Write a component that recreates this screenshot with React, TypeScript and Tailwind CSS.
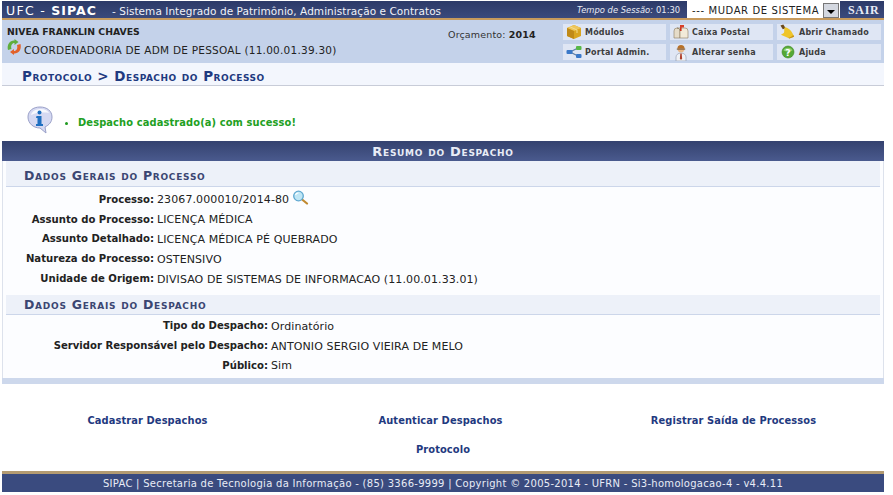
import React from "react";

const font = "font-['DejaVu_Sans','Verdana',sans-serif]";

function Row({ label, labelW, children }: { label: string; labelW: string; children: React.ReactNode }) {
  return (
    <div className="flex h-[19.8px] items-center text-[11px] leading-none text-[#222]">
      <div className={`${labelW} shrink-0 text-right text-[10.1px] font-bold text-[#222]`}>{label}</div>
      <div className="ml-[3px] flex items-center tracking-[0.1px]">{children}</div>
    </div>
  );
}

function SectionTitle({ children, tall }: { children: React.ReactNode; tall?: boolean }) {
  return (
    <div
      className={`${tall ? "h-[26px] pt-[5px]" : "h-[20px] pt-[1px]"} mx-[3px] flex items-center border-b border-[#ccd6ea] bg-[#edf1f9] pl-[18px] text-[12.5px] font-bold leading-none tracking-[0.73px] text-[#3b4672] [font-variant:small-caps]`}
    >
      {children}
    </div>
  );
}

function Btn({ icon, label, w }: { icon: React.ReactNode; label: string; w: string }) {
  return (
    <div className={`${w} flex h-[16px] items-center whitespace-nowrap bg-[#dfe6f4] text-[8px] font-bold leading-none tracking-[0.2px] text-[#3d3d3d]`}>
      <span className="ml-[3px] mr-[3px] flex w-[16px] justify-center">{icon}</span>
      <span className="pt-[2px]">{label}</span>
    </div>
  );
}

const Box = (
  <svg width="16" height="16" viewBox="0 0 16 16">
    <path d="M1 4 8 1l7 3v8l-7 3-7-3z" fill="#d9a520" />
    <path d="M1 4l7 3 7-3-7-3z" fill="#eec65a" />
    <path d="M8 7v8l-7-3V4z" fill="#c08a18" />
    <path d="M4 2.800 11 6v3" stroke="#f3dc8f" strokeWidth="1" fill="none" />
  </svg>
);
const Mail = (
  <svg width="16" height="16" viewBox="0 0 16 16">
    <path d="M1 7a3 3 0 0 1 6 0v7H1z" fill="#e6dcc8" stroke="#8a7a60" strokeWidth=".6" />
    <path d="M4 4h8a3 3 0 0 1 3 3v7H7V7a3 3 0 0 0-3-3z" fill="#f2ead9" stroke="#8a7a60" strokeWidth=".6" />
    <path d="M7 1h1.600v6H7z" fill="#c8321f" />
    <path d="M7 1h4v2.500H7z" fill="#d8402a" />
  </svg>
);
const Bell = (
  <svg width="17" height="16" viewBox="0 0 17 16">
    <path d="M0.500 1 3.500 0 6 4 3 5z" fill="#6b4a1c" />
    <path d="M5 3c3 0 7 3 9 8l1 2-5 2-9-4 3-2c1-1 0-4 1-6z" fill="#efc52a" />
    <path d="M10 15l5-2-1-2c-1 2-3 3-5 3z" fill="#c4911a" />
  </svg>
);
const Share = (
  <svg width="16" height="14" viewBox="0 0 16 14">
    <path d="M4 7 12 3M4 7l8 4" stroke="#5a7aa0" strokeWidth="1.200" />
    <rect x="0.500" y="5" width="6" height="4" rx="1" fill="#3a78c8" />
    <rect x="10" y="1" width="5.500" height="4" rx="1" fill="#58b848" />
    <rect x="10" y="9" width="5.500" height="4" rx="1" fill="#3a78c8" />
  </svg>
);
const Person = (
  <svg width="14" height="17" viewBox="0 0 14 17">
    <path d="M2 17v-4c0-2 2-4 5-4s5 2 5 4v4z" fill="#eef1f6" stroke="#8a94a8" strokeWidth=".6" />
    <path d="M6.300 9.500h1.400l.4 5-1.100 1.400-1.100-1.400z" fill="#b0402c" />
    <circle cx="7" cy="5" r="3.400" fill="#e8b88a" />
    <path d="M3.400 4.400C3.600 1.600 5.200 1 7 1s3.400.6 3.600 3.400z" fill="#b8722a" />
    <path d="M2.800 4.600h8.400v1H2.800z" fill="#705030" />
  </svg>
);
const Help = (
  <svg width="14" height="14" viewBox="0 0 14 14">
    <circle cx="7" cy="7" r="6" fill="#55a834" stroke="#3c8423" strokeWidth=".6" />
    <path d="M2.500 5.500a4.600 3.600 0 0 1 9 0c-2 1.500-7 1.500-9 0z" fill="#9ad77a" opacity=".8" />
    <text x="7" y="10.500" textAnchor="middle" fontSize="9.500" fontWeight="700" fill="#fff" fontFamily="DejaVu Sans">?</text>
  </svg>
);
const Arrows = (
  <svg width="16" height="16" viewBox="0 0 15 16">
    <path d="M1.500 11C0 5 4 1 8 1.500V0l4 3-4 3V4C5.500 4 4 6.500 5 10z" fill="#5fae3c" />
    <path d="M14 5c1.500 6-2.500 10-6.500 9.500V16l-4-3 4-3v2c2.500 0 4-2.500 3-6z" fill="#e2622a" />
  </svg>
);
const Info = (
  <svg width="30" height="30" viewBox="0 0 30 30">
    <path d="M14 2c7 0 12 4 12 10 0 5-3 8-7 10l1 6-6-5C7 23 2 18 2 12 2 6 7 2 14 2z" fill="#d5d9f2" stroke="#9aa0c8" strokeWidth="1" />
    <path d="M5 10c1-4 5-6 10-6 4 0 7 2 8 4-4-1-13-1-18 2z" fill="#fff" opacity=".8" />
    <circle cx="13.500" cy="7.500" r="2" fill="#1f6fc0" />
    <path d="M10.500 11h5v8h1.500v2h-7v-2h1.500v-6h-1.500z" fill="#1f6fc0" />
  </svg>
);
const Lens = (
  <svg width="17" height="15" viewBox="0 0 17 15">
    <path d="M9.500 9 15 13.500" stroke="#c08a30" strokeWidth="2.200" strokeLinecap="round" />
    <circle cx="6.500" cy="6" r="4.800" fill="#bfe6f5" stroke="#5fa8d0" strokeWidth="1.300" />
    <path d="M3.500 5a3 3 0 0 1 3-2" stroke="#fff" strokeWidth="1.200" fill="none" />
  </svg>
);

export default function App() {
  return (
    <div className={`${font} h-[495px] w-[893px] overflow-hidden bg-white`}>
      <div className="flex h-[471px] flex-col pl-[2px] pr-[9px]">
        <header className="mt-[1px] flex h-[17px] shrink-0 items-center bg-gradient-to-b from-[#2c3a68] to-[#3b4a7c] text-white">
          <div className="ml-[4px] w-[106px] whitespace-nowrap pt-[3px] text-[12.5px] leading-none tracking-[1px]">
            <span className="tracking-[1.300px]">UFC - </span>
            <b>SIPAC</b>
          </div>
          <div className="whitespace-nowrap pt-[3px] text-[10.500px] leading-none tracking-[0.05px] text-[#f0f2f8]">
            - Sistema Integrado de Patrimônio, Administração e Contratos
          </div>
          <div className="ml-auto whitespace-nowrap pt-[1px] text-[8.400px] italic leading-none text-[#e8ebf4]">Tempo de Sessão:</div>
          <div className="ml-[3px] w-[28px] pt-[1px] text-[8.400px] leading-none text-[#e8ebf4]">01:30</div>
          <div className="ml-[3px] flex h-[17px] w-[153px] items-center bg-white pl-[5px] text-[10px] leading-none tracking-[0.6px] text-[#222]">
            <span className="flex-1 whitespace-nowrap pt-[3px]">--- MUDAR DE SISTEMA</span>
            <span className="mr-[1px] mt-[2px] flex h-[15px] w-[16px] items-end justify-center border border-[#777] bg-[#d4d8e0] pb-[3px]">
              <span className="h-0 w-0 border-x-[4px] border-t-[4px] border-x-transparent border-t-black" />
            </span>
          </div>
          <div className="w-[44px] pl-[8px] pt-[1px] font-['Liberation_Serif',serif] text-[12px] font-bold leading-none tracking-[0.7px] text-[#e8ebf6]">SAIR</div>
        </header>
        <div className="h-[2px] shrink-0 bg-[#c79a5c]" />
        <div className="flex h-[43px] shrink-0 bg-[#c4d2ea]">
          <div className="flex w-[441px] shrink-0 flex-col pl-[5px] pt-[6px] text-[#222]">
            <div className="text-[9.300px] font-bold leading-[11px]">NIVEA FRANKLIN CHAVES</div>
            <div className="mt-[5px] flex items-center text-[10.500px] leading-none tracking-[0.24px]">
              <span className="mr-[2px] -ml-[1px] -mt-[3px] flex">{Arrows}</span>
              <span className="pt-[3px]">COORDENADORIA DE ADM DE PESSOAL (11.00.01.39.30)</span>
            </div>
          </div>
          <div className="w-[120px] shrink-0 pl-[5px] pt-[10px] text-[9.500px] leading-none tracking-[0.15px] text-[#333]">
            Orçamento: <b className="text-[#222]">2014</b>
          </div>
          <div className="mt-[4px] flex flex-col gap-[4px]">
            <div className="flex gap-[4px]">
              <Btn icon={Box} label="Módulos" w="w-[103px]" />
              <Btn icon={Mail} label="Caixa Postal" w="w-[103px]" />
              <Btn icon={Bell} label="Abrir Chamado" w="w-[104px]" />
            </div>
            <div className="flex gap-[4px]">
              <Btn icon={Share} label="Portal Admin." w="w-[103px]" />
              <Btn icon={Person} label="Alterar senha" w="w-[103px]" />
              <Btn icon={Help} label="Ajuda" w="w-[104px]" />
            </div>
          </div>
        </div>
        <div className="flex h-[23px] shrink-0 items-center border-b border-[#c8ccd8] bg-[#f3f6fd] pl-[20px] pt-[5px] text-[13.500px] font-bold leading-none tracking-[0.5px] text-[#1f3a80] [font-variant:small-caps]">
          Protocolo &gt; Despacho do Processo
        </div>
        <div className="h-[55px] shrink-0 pl-[24px] pt-[19px]">
          <div className="flex h-[30px] items-center">
            <span className="mr-[9px] flex">{Info}</span>
            <span className="mr-[10px] mt-[6px] h-[3px] w-[3px] rounded-full bg-[#1f9a1f]" />
            <span className="mt-[6px] text-[9.900px] font-bold leading-none tracking-[0.12px] text-[#22a022]">Despacho cadastrado(a) com sucesso!</span>
          </div>
        </div>
        <div className="flex h-[20px] shrink-0 items-center justify-center bg-gradient-to-b from-[#34426f] to-[#4a5a8e] text-[13px] font-bold leading-none tracking-[0.7px] text-[#e8ecf6] [font-variant:small-caps]">
          Resumo do Despacho
        </div>
        <div className="border-x border-[#dde2ec] bg-[#fcfdff]">
          <SectionTitle tall>Dados Gerais do Processo</SectionTitle>
          <div className="h-[108px] pt-[3px]">
            <Row label="Processo:" labelW="w-[151px]">
              23067.000010/2014-80<span className="-mt-[5px] ml-[3px] flex">{Lens}</span>
            </Row>
            <Row label="Assunto do Processo:" labelW="w-[151px]">LICENÇA MÉDICA</Row>
            <Row label="Assunto Detalhado:" labelW="w-[151px]">LICENÇA MÉDICA PÉ QUEBRADO</Row>
            <Row label="Natureza do Processo:" labelW="w-[151px]">OSTENSIVO</Row>
            <Row label="Unidade de Origem:" labelW="w-[151px]">DIVISAO DE SISTEMAS DE INFORMACAO (11.00.01.33.01)</Row>
          </div>
          <SectionTitle>Dados Gerais do Despacho</SectionTitle>
          <div className="h-[63px] pt-[1.500px]">
            <Row label="Tipo do Despacho:" labelW="w-[265px]">Ordinatório</Row>
            <Row label="Servidor Responsável pelo Despacho:" labelW="w-[265px]">ANTONIO SERGIO VIEIRA DE MELO</Row>
            <Row label="Público:" labelW="w-[265px]">Sim</Row>
          </div>
        </div>
        <div className="h-[6px] shrink-0 bg-[#cdd8ec]" />
        <div className="flex-1 text-[9.900px] font-bold leading-none tracking-[0.1px] text-[#1f3a80]">
          <div className="mt-[32px] -ml-[1px] mr-[4px] grid grid-cols-3 text-center">
            <span>Cadastrar Despachos</span>
            <span>Autenticar Despachos</span>
            <span>Registrar Saída de Processos</span>
          </div>
          <div className="mt-[19px] text-center">Protocolo</div>
        </div>
      </div>
      <div className="pl-[2px] pr-[9px]">
        <div className="h-[3px] bg-[#b39b72]" />
        <div className="flex h-[18px] items-center justify-center bg-[#3a4b7f] pt-[1px] text-[10px] leading-none tracking-[0.28px] text-[#e8ecf6]">
          SIPAC | Secretaria de Tecnologia da Informação - (85) 3366-9999 | Copyright © 2005-2014 - UFRN - Si3-homologacao-4 - v4.4.11
        </div>
      </div>
    </div>
  );
}
